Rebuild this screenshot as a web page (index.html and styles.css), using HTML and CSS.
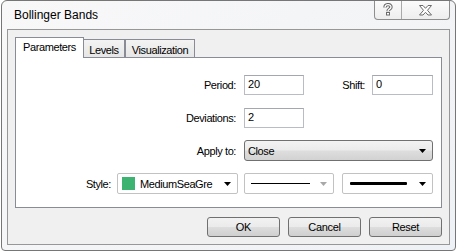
FILE: index.html
```html
<!DOCTYPE html>
<html>
<head>
<meta charset="utf-8">
<link rel="stylesheet" href="styles.css">
</head>
<body>
<div class="window">
  <div class="titlebar">
    <span class="title">Bollinger Bands</span>
    <div class="caption">
      <div class="cbtn help">
        <svg width="10" height="13" viewBox="0 0 10 13">
          <path d="M2,4.5 C2,0.8 8,0.8 8,4 C8,6.2 5,6 5,8.2" fill="none" stroke="#6b6b6b" stroke-width="3.4"/>
          <path d="M2,4.5 C2,0.8 8,0.8 8,4 C8,6.2 5,6 5,8.2" fill="none" stroke="#ffffff" stroke-width="1.3"/>
          <rect x="3.5" y="9.5" width="3" height="2.5" fill="#fff" stroke="#6b6b6b" stroke-width="1"/>
        </svg>
      </div>
      <div class="cbtn close">
        <svg width="15" height="11" viewBox="0 0 15 11">
          <polygon points="1.5,0.5 5,0.5 7.5,3.3 10,0.5 13.5,0.5 9.5,5.3 13.5,10 10,10 7.5,7.3 5,10 1.5,10 5.5,5.3" fill="#fff" stroke="#6b6b6b" stroke-width="1"/>
        </svg>
      </div>
    </div>
  </div>
  <div class="client">
    <div class="tabs">
      <div class="tab active">Parameters</div>
      <div class="tab t-levels">Levels</div>
      <div class="tab t-vis">Visualization</div>
    </div>
    <div class="panel">
      <div class="row r1">
        <span class="lbl">Period:</span>
        <span class="input w60">20</span>
        <span class="lbl shift">Shift:</span>
        <span class="input w61">0</span>
      </div>
      <div class="row r2">
        <span class="lbl">Deviations:</span>
        <span class="input w60">2</span>
      </div>
      <div class="row r3">
        <span class="lbl">Apply to:</span>
        <span class="combo sys">
          <span class="ctext">Close</span>
          <svg class="arrow" width="7" height="4" viewBox="0 0 7 4"><polygon points="0,0 7,0 3.5,4" fill="#000"/></svg>
        </span>
      </div>
      <div class="row r4">
        <span class="lbl style">Style:</span>
        <span class="combo plain color">
          <span class="swatch"></span>
          <span class="ctext">MediumSeaGre</span>
          <svg class="arrow" width="7" height="4" viewBox="0 0 7 4"><polygon points="0,0 7,0 3.5,4" fill="#000"/></svg>
        </span>
        <span class="combo plain line1">
          <span class="ln thin"></span>
          <svg class="arrow" width="7" height="4" viewBox="0 0 7 4"><polygon points="0,0 7,0 3.5,4" fill="#a8a8a8"/></svg>
        </span>
        <span class="combo plain line2">
          <span class="ln thick"></span>
          <svg class="arrow" width="7" height="4" viewBox="0 0 7 4"><polygon points="0,0 7,0 3.5,4" fill="#000"/></svg>
        </span>
      </div>
    </div>
    <div class="buttons">
      <div class="btn">OK</div>
      <div class="btn">Cancel</div>
      <div class="btn">Reset</div>
    </div>
  </div>
</div>
</body>
</html>
```

FILE: styles.css
```css
html, body {
  margin: 0;
  padding: 0;
  background: #ffffff;
}
body {
  font-family: "Liberation Sans", Arial, sans-serif;
  font-size: 11px;
  color: #000;
}
.window {
  box-sizing: border-box;
  margin-left: 1px;
  width: 455px;
  height: 251px;
  border: 1px solid #767676;
  border-radius: 6px 6px 4px 4px;
  background: linear-gradient(135deg, #f8f8f9 0%, #f3f4f6 60%, #eef1f5 100%);
  padding: 0 5px 5px 5px;
  display: flex;
  flex-direction: column;
}
.titlebar {
  height: 28px;
  display: flex;
  align-items: flex-start;
  flex: none;
}
.title {
  font-size: 12px;
  margin-left: 7px;
  margin-top: 6px;
  line-height: 16px;
  color: #000;
}
.caption {
  margin-left: auto;
  display: flex;
  height: 19px;
  box-sizing: border-box;
  border: 1px solid #8e8e8e;
  border-top: none;
  border-radius: 0 0 4px 4px;
  background: linear-gradient(#fbfbfb, #eeeeee);
  overflow: hidden;
}
.cbtn {
  display: flex;
  align-items: center;
  justify-content: center;
  box-sizing: border-box;
}
.help {
  width: 26px;
  padding-bottom: 1px;
}
.close {
  width: 48px;
  border-left: 1px solid #a9a9a9;
  padding-top: 1px;
}
.client {
  flex: 1;
  box-sizing: border-box;
  border: 1px solid #979797;
  background: #f0f0f0;
  padding: 7px 7px 7px 7px;
  display: flex;
  flex-direction: column;
}
.tabs {
  display: flex;
  align-items: flex-end;
  height: 20px;
  position: relative;
  z-index: 1;
}
.tab {
  box-sizing: border-box;
  height: 18px;
  border: 1px solid #898c95;
  border-bottom: none;
  background: linear-gradient(#f3f3f3, #e6e6e6);
  text-align: center;
  line-height: 18px;
  letter-spacing: -0.4px;
  padding-top: 1px;
}
.tab.active {
  height: 21px;
  margin-bottom: -1px;
  width: 69px;
  background: #ffffff;
  line-height: 17px;
  padding-top: 1px;
}
.t-levels {
  width: 42px;
  margin-left: -1px;
}
.t-vis {
  width: 70px;
  margin-left: 0;
}
.panel {
  box-sizing: border-box;
  height: 151px;
  border: 1px solid #898c95;
  background: #ffffff;
  padding-top: 17px;
  display: flex;
  flex-direction: column;
}
.row {
  display: flex;
  align-items: center;
}
.r1, .r2 { height: 20px; }
.r3, .r4 { height: 21px; }
.r2 { margin-top: 13px; }
.r3 { margin-top: 12px; }
.r4 { margin-top: 12px; }
.lbl {
  width: 220px;
  margin-right: 8px;
  text-align: right;
  letter-spacing: -0.4px;
  flex: none;
}
.lbl.shift {
  width: 61px;
  margin-right: 7px;
}
.lbl.style {
  width: 95px;
  margin-right: 6px;
}
.input {
  box-sizing: border-box;
  height: 20px;
  border: 1px solid #b9bcc3;
  border-top-color: #a4a7ae;
  background: #fff;
  padding-left: 3px;
  line-height: 17px;
  letter-spacing: -0.2px;
  flex: none;
}
.w60 { width: 60px; }
.w61 { width: 61px; }
.combo {
  box-sizing: border-box;
  height: 21px;
  display: flex;
  align-items: center;
  flex: none;
}
.combo .arrow {
  margin-left: auto;
  margin-right: 6px;
}
.combo.sys {
  width: 189px;
  border: 1px solid #707070;
  border-radius: 3px;
  background: linear-gradient(#f3f3f3 0%, #ebebeb 48%, #dedede 52%, #d2d2d2 100%);
  padding-left: 3px;
  letter-spacing: -0.4px;
}
.combo.plain {
  border: 1px solid #c2c2c2;
  border-radius: 2px;
  background: #ffffff;
}
.color {
  width: 121px;
  margin-right: 6px;
  padding-left: 4px;
  letter-spacing: -0.4px;
}
.swatch {
  width: 13px;
  height: 13px;
  background: #3cb371;
  margin-right: 5px;
  flex: none;
}
.line1 {
  width: 90px;
  margin-right: 8px;
  padding-left: 6px;
}
.line2 {
  width: 91px;
  padding-left: 7px;
}
.ln {
  display: block;
  background: #000;
  flex: none;
}
.ln.thin {
  width: 59px;
  height: 1px;
}
.ln.thick {
  width: 57px;
  height: 3px;
  border-radius: 1px;
}
.buttons {
  display: flex;
  justify-content: flex-end;
  margin-top: 9px;
}
.btn {
  box-sizing: border-box;
  width: 73px;
  height: 20px;
  margin-left: 8px;
  border: 1px solid #707070;
  border-radius: 3px;
  background: linear-gradient(#f2f2f2 0%, #ebebeb 48%, #dddddd 52%, #cfcfcf 100%);
  text-align: center;
  line-height: 18px;
  letter-spacing: -0.3px;
}
```
